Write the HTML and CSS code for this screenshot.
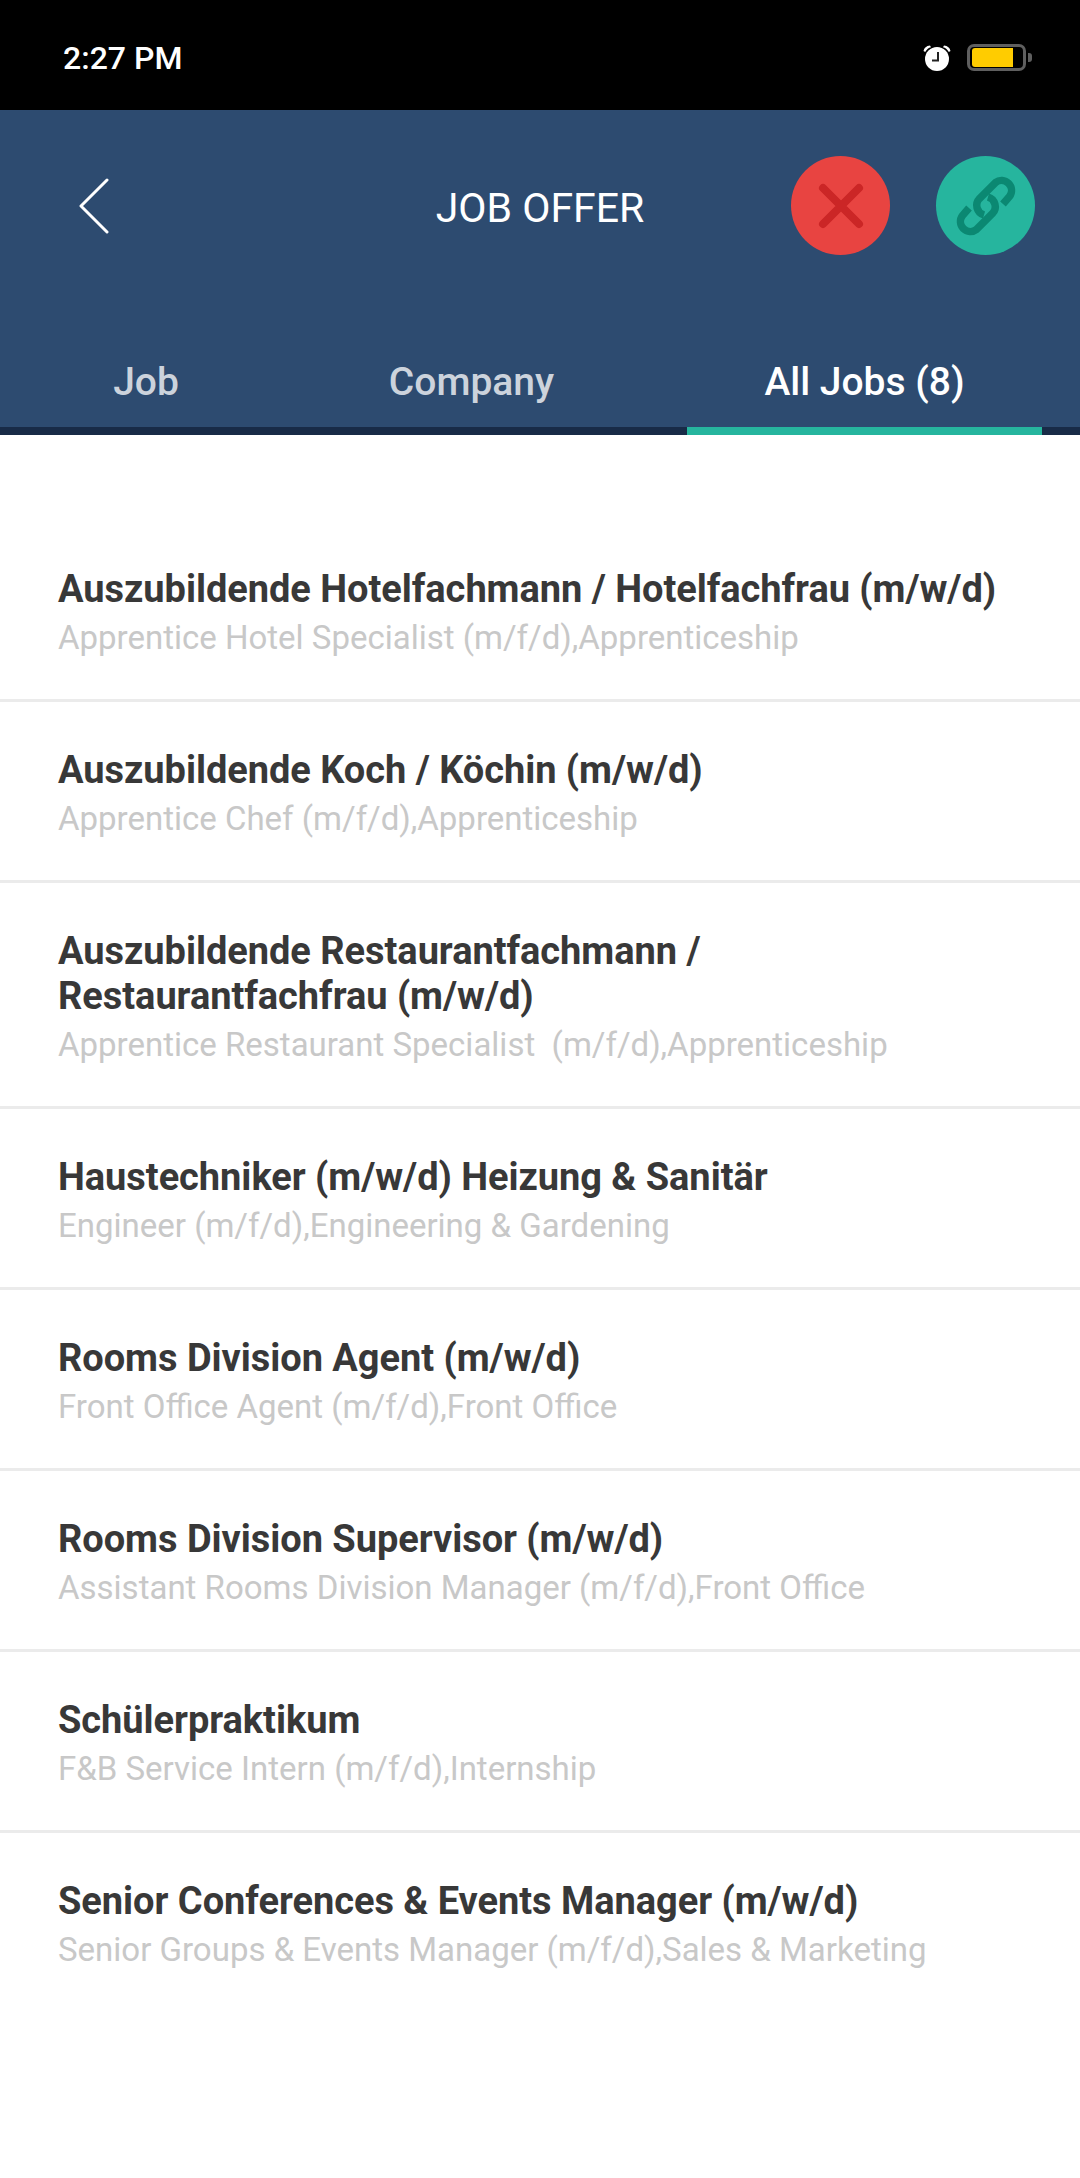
FILE: index.html
```html
<!DOCTYPE html>
<html lang="en">

<head>
    <meta charset="UTF-8">
    <meta name="viewport" content="width=device-width, initial-scale=1.0">
    <title>Job Offer</title>
    <link rel="stylesheet" href="styles.css">
</head>

<body>

    <!-- Status bar -->
    <div class="status-bar">
        <span class="status-time">2:27 PM</span>
        <div class="status-icons">
            <svg class="icon-alarm" width="28" height="26" viewBox="0 0 28 26">
                <path d="M0.5 6 Q1.5 1 7 0.5 L8 2.2 Q4.5 3 2.2 7 Z" fill="#fff"/>
                <path d="M27.5 6 Q26.5 1 21 0.5 L20 2.2 Q23.5 3 25.8 7 Z" fill="#fff"/>
                <circle cx="14" cy="14" r="12" fill="#fff"/>
                <path d="M15 7 V15.5 H9" fill="none" stroke="#222" stroke-width="2"/>
            </svg>
            <div class="battery">
                <div class="battery-fill"></div>
            </div>
            <div class="battery-tip"></div>
        </div>
    </div>

    <!-- Header -->
    <header class="header">
        <div class="toolbar">
            <svg class="icon-back" width="32" height="56" viewBox="0 0 32 56">
                <path d="M29 2 L3 28 L29 54" fill="none" stroke="#fff" stroke-width="3" stroke-linecap="round" stroke-linejoin="round"/>
            </svg>
            <h1 class="page-title">JOB OFFER</h1>
            <div class="actions">
                <button class="round-btn btn-close">
                    <svg width="46" height="46" viewBox="0 0 46 46">
                        <path d="M5 5 L41 41 M41 5 L5 41" fill="none" stroke="#cb2626" stroke-width="8" stroke-linecap="round"/>
                    </svg>
                </button>
                <button class="round-btn btn-link">
                    <svg width="60" height="60" viewBox="0 0 60 60">
                        <path d="M47 28 L53.5 20.5 A10 10 0 0 0 39.5 6.5 L23.5 22.5 A10 10 0 0 0 28 39" fill="none" stroke="#0b8872" stroke-width="7.5"/>
                        <path d="M13 32 L6.5 39.5 A10 10 0 0 0 20.5 53.5 L36.5 37.5 A10 10 0 0 0 32 21" fill="none" stroke="#0b8872" stroke-width="7.5"/>
                    </svg>
                </button>
            </div>
        </div>

        <!-- Tabs -->
        <nav class="tabs">
            <a class="tab tab-job">Job</a>
            <a class="tab tab-company">Company</a>
            <a class="tab tab-all active">All Jobs (8)</a>
        </nav>
    </header>

    <!-- Job list -->
    <main class="job-list">
        <div class="job-row">
            <h2 class="job-title">Auszubildende Hotelfachmann / Hotelfachfrau (m/w/d)</h2>
            <p class="job-sub">Apprentice Hotel Specialist (m/f/d),Apprenticeship</p>
        </div>
        <div class="job-row">
            <h2 class="job-title">Auszubildende Koch / Köchin (m/w/d)</h2>
            <p class="job-sub">Apprentice Chef (m/f/d),Apprenticeship</p>
        </div>
        <div class="job-row">
            <h2 class="job-title">Auszubildende Restaurantfachmann / Restaurantfachfrau (m/w/d)</h2>
            <p class="job-sub">Apprentice Restaurant Specialist&nbsp; (m/f/d),Apprenticeship</p>
        </div>
        <div class="job-row">
            <h2 class="job-title">Haustechniker (m/w/d) Heizung &amp; Sanitär</h2>
            <p class="job-sub">Engineer (m/f/d),Engineering &amp; Gardening</p>
        </div>
        <div class="job-row">
            <h2 class="job-title">Rooms Division Agent (m/w/d)</h2>
            <p class="job-sub">Front Office Agent (m/f/d),Front Office</p>
        </div>
        <div class="job-row">
            <h2 class="job-title">Rooms Division Supervisor (m/w/d)</h2>
            <p class="job-sub">Assistant Rooms Division Manager (m/f/d),Front Office</p>
        </div>
        <div class="job-row">
            <h2 class="job-title">Schülerpraktikum</h2>
            <p class="job-sub">F&amp;B Service Intern (m/f/d),Internship</p>
        </div>
        <div class="job-row">
            <h2 class="job-title">Senior Conferences &amp; Events Manager (m/w/d)</h2>
            <p class="job-sub">Senior Groups &amp; Events Manager (m/f/d),Sales &amp; Marketing</p>
        </div>
    </main>

</body>

</html>
```

FILE: styles.css
```css
/* General body styles */
body {
    font-family: 'Roboto', sans-serif;
    background: #fff;
    margin: 0;
    padding: 0;
    height: 2178px;
    overflow: hidden;
}

/* Status bar */
.status-bar {
    height: 110px;
    background: #000;
    display: flex;
    justify-content: space-between;
    align-items: center;
    padding: 5px 48px 0 63px;
    box-sizing: border-box;
}

.status-time {
    color: #fff;
    font-size: 32px;
    font-weight: 500;
}

.status-icons {
    display: flex;
    align-items: center;
}

.icon-alarm {
    margin-right: 16px;
}

.battery {
    width: 41px;
    height: 19px;
    border: 3px solid #5f5f5f;
    border-radius: 7px;
    padding: 1px 10px 1px 2px;
}

.battery-fill {
    width: 41px;
    height: 19px;
    background: #ffcc00;
    border-radius: 3px 0 0 3px;
}

.battery-tip {
    width: 4px;
    height: 9px;
    margin-left: 2px;
    background: #5f5f5f;
    border-radius: 0 3px 3px 0;
}

/* Header */
.header {
    background: #2d4b70;
}

.toolbar {
    height: 191px;
    display: grid;
    grid-template-columns: 1fr auto 1fr;
    align-items: center;
    padding: 0 45px;
}

.icon-back {
    margin-left: 33px;
}

.page-title {
    margin: 4px 0 0;
    color: #fff;
    font-size: 41px;
    font-weight: 400;
}

.actions {
    display: flex;
    justify-content: flex-end;
    gap: 46px;
}

.round-btn {
    width: 99px;
    height: 99px;
    border: none;
    border-radius: 50%;
    padding: 0;
    display: flex;
    justify-content: center;
    align-items: center;
}

.btn-close {
    background: #e84441;
}

.btn-link {
    background: #26b59e;
}

/* Tabs */
.tabs {
    height: 126px;
    border-bottom: 8px solid #182b47;
    display: flex;
}

.tab {
    color: #ccd3dc;
    font-size: 39px;
    line-height: 46px;
    font-weight: 500;
    text-align: center;
    padding-top: 58px;
}

.tab-job {
    width: 292px;
}

.tab-company {
    width: 359px;
    margin-right: 36px;
}

.tab-all {
    width: 355px;
}

.tab.active {
    height: 68px;
    color: #fff;
    border-bottom: 8px solid #26b59e;
}

/* Job list */
.job-list {
    padding-top: 86px;
}

.job-row {
    padding: 46px 60px 36px 58px;
    border-bottom: 3px solid #ebebeb;
}

.job-row:last-child {
    border-bottom: none;
}

.job-title {
    margin: 0;
    color: #383838;
    font-size: 38px;
    line-height: 45px;
    font-weight: 700;
    letter-spacing: -0.04px;
}

.job-sub {
    margin: 0;
    color: #c8c8c8;
    font-size: 33px;
    line-height: 51px;
}
```
